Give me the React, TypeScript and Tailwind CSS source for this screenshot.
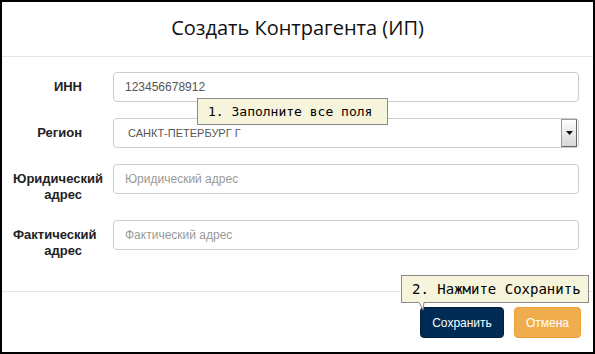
import React from "react";

const labelCls =
  "w-[69px] shrink-0 text-right font-bold text-[13px] leading-[16px] text-[#222] pt-[7px] whitespace-nowrap";

function Row({
  label,
  children,
  mb,
}: {
  label: React.ReactNode;
  children: React.ReactNode;
  mb: string;
}) {
  return (
    <div className={`flex items-start ${mb}`}>
      <div className="w-[11px] shrink-0" />
      <div className={labelCls}>{label}</div>
      <div className="w-[31px] shrink-0" />
      {children}
    </div>
  );
}

function TextInput({ value, placeholder }: { value?: string; placeholder?: string }) {
  return (
    <div className="w-[466px] h-[30px] border border-[#ccc] rounded-[4px] bg-white flex items-center pl-[11px] text-[12px]">
      {value ? (
        <span className="text-[#555]">{value}</span>
      ) : (
        <span className="text-[#999]">{placeholder}</span>
      )}
    </div>
  );
}

export default function App() {
  return (
    <div
      className="w-[595px] h-[354px] border-2 border-black bg-white flex flex-col relative"
      style={{ fontFamily: '"Liberation Sans", Arial, sans-serif' }}
    >
      <div className="h-[55px] shrink-0 border-b border-[#e5e5e5] flex items-center justify-center">
        <span
          className="text-[20px] text-[#111] pb-[3px]"
          style={{ fontFamily: '"Open Sans", sans-serif' }}
        >
          Создать Контрагента (ИП)
        </span>
      </div>
      <div className="h-[235px] shrink-0 border-b border-[#e5e5e5] pt-[15px]">
        <Row label="ИНН" mb="mb-[16px]">
          <TextInput value="123456678912" />
        </Row>
        <Row label="Регион" mb="mb-[16px]">
          <div className="w-[466px] h-[30px] border border-[#ccc] rounded-[4px] bg-white flex items-center pl-[14px] relative">
            <span className="text-[11px] text-[#555]">САНКТ-ПЕТЕРБУРГ Г</span>
            <div className="absolute right-[1px] top-[0px] w-[16px] h-[28px] border border-[#666] border-t-[#999] border-l-[#999] bg-gradient-to-b from-[#fdfdfd] to-[#d6d6d6] flex items-center justify-center">
              <svg width="7" height="4" viewBox="0 0 7 4">
                <path d="M0 0H7L3.5 4Z" fill="#111" />
              </svg>
            </div>
          </div>
        </Row>
        <Row
          label={
            <>
              Юридический
              <br />
              адрес
            </>
          }
          mb="mb-[17px]"
        >
          <TextInput placeholder="Юридический адрес" />
        </Row>
        <Row
          label={
            <>
              Фактический
              <br />
              адрес
            </>
          }
          mb=""
        >
          <TextInput placeholder="Фактический адрес" />
        </Row>
      </div>
      <div className="flex-1 flex items-start justify-end pt-[15px] pr-[12px] gap-[10px]">
        <button className="w-[84px] h-[31px] rounded-[4px] bg-[#002b55] border border-[#001f3f] text-white text-[12px]">
          Сохранить
        </button>
        <button className="w-[67px] h-[31px] rounded-[4px] bg-[#f0ad4e] border border-[#eea236] text-white text-[12px]">
          Отмена
        </button>
      </div>

      <div
        className="absolute left-[195px] top-[96px] w-[191px] h-[27px] bg-[#f7f4dc] border border-[#8a8a8a] flex items-center pl-[10px] text-[13px] text-black"
        style={{ fontFamily: '"DejaVu Sans Mono", monospace' }}
      >
        1. Заполните все поля
      </div>

      <div
        className="absolute left-[399px] top-[273px] w-[188px] h-[28px] bg-[#f7f4dc] border border-[#8a8a8a] flex items-center pl-[10px] text-[14px] text-black"
        style={{ fontFamily: '"DejaVu Sans Mono", monospace' }}
      >
        2. Нажмите Сохранить
        <svg
          className="absolute left-[16px] top-[25px]"
          width="12"
          height="10"
          viewBox="0 0 12 10"
        >
          <path d="M1 1.5L5 9L6 1.5" fill="#f7f4dc" stroke="#8a8a8a" strokeWidth="1" />
          <rect x="1.5" y="0" width="4" height="2" fill="#f7f4dc" />
        </svg>
      </div>
    </div>
  );
}
